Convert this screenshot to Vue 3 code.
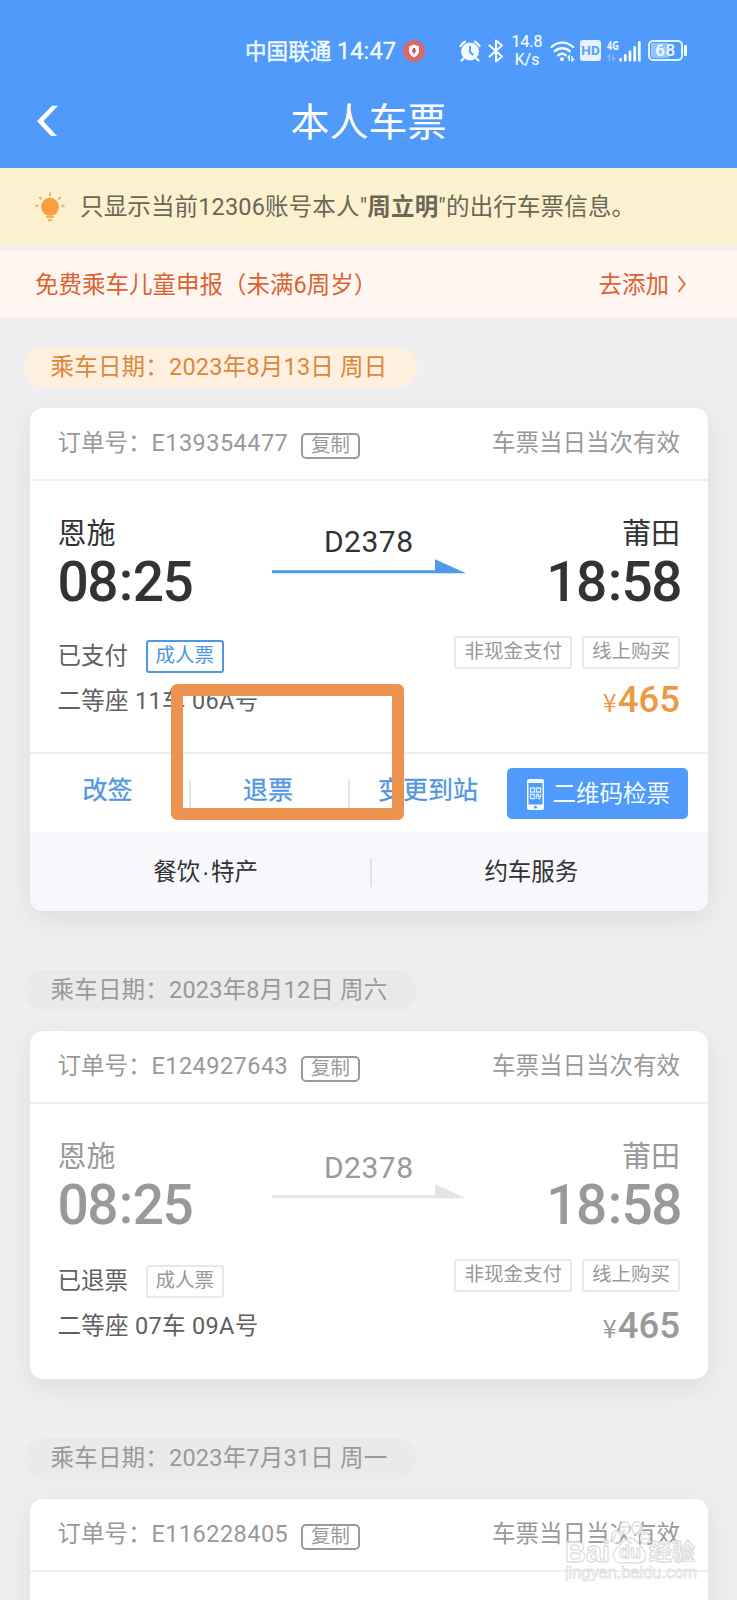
<script setup>
import { h } from 'vue'

const tickets = [
  {
    date: '2023年8月13日 周日', order: 'E139354477', full: true, active: true,
    status: '已支付', seat: '二等座 11车 06A号',
  },
  {
    date: '2023年8月12日 周六', order: 'E124927643', full: true, active: false,
    status: '已退票', seat: '二等座 07车 09A号',
  },
  { date: '2023年7月31日 周一', order: 'E116228405', full: false, active: false },
]

// Sets Latin letters and digits in the numeral face, the rest in the Chinese face.
const Mixed = ({ text }) =>
  h('span', text.split(/([\x20-\x7e]+)/).map((part, i) => (i % 2 ? h('span', { class: 'latin' }, part) : part)))
Mixed.props = ['text']
</script>

<template>
  <div class="screen">
    <header class="top">
      <div class="status">
        <span class="carrier">中国联通</span>
        <span class="clock">14:47</span>
        <svg class="shield" width="22" height="22" viewBox="0 0 22 22">
          <circle cx="11" cy="11" r="11" fill="#d9686a" />
          <path d="M11 4.600l5 1.900v4.300c0 3.100-2.100 5.400-5 6.600-2.900-1.200-5-3.500-5-6.600V6.500z" fill="#fff" />
          <path d="M11 8v5.500M9 10.700h4" stroke="#c9595c" stroke-width="2" />
        </svg>
        <svg class="alarm" width="22" height="22" viewBox="0 0 22 22">
          <circle cx="11" cy="11.500" r="9" fill="#f2fbff" />
          <path d="M1.500 6a14 14 0 0 1 4.500-4.300M20.500 6a14 14 0 0 0-4.500-4.300M4.500 18.500l-2 2M17.500 18.500l2 2" stroke="#f2fbff" stroke-width="2.200" fill="none" stroke-linecap="round" />
          <path d="M11 6v6l3.200 3" stroke="#4f9afb" stroke-width="1.800" fill="none" />
        </svg>
        <svg class="bt" width="16" height="24" viewBox="0 0 16 24">
          <path d="M1.500 6.500l12.500 11-6 5V1.500l6 5-12.500 11" stroke="#f2fbff" stroke-width="2.100" fill="none" stroke-linejoin="round" stroke-linecap="round" />
        </svg>
        <span class="speed"><span>14.8</span><span>K/s</span></span>
        <svg class="wifi" width="25" height="22" viewBox="0 0 25 22">
          <path d="M1.500 7a15.500 15.500 0 0 1 21.500 0M4.800 11.200a11 11 0 0 1 15 0M8.300 15.300a6 6 0 0 1 7.500 0" stroke="#f2fbff" stroke-width="2.400" fill="none" stroke-linecap="round" />
          <circle cx="12" cy="19.200" r="2" fill="#f2fbff" />
          <path d="M19.300 21v-5l-1.700 2M22 16v5l2-2.300" stroke="#f2fbff" stroke-width="1.400" fill="none" />
        </svg>
        <span class="hd">HD</span>
        <span class="net"><b>4G</b>
          <svg width="9" height="7" viewBox="0 0 9 7"><path d="M2.500 7V.8L.7 3M6 0v6l2-2.200" stroke="#86bbff" stroke-width="1.300" fill="none" /></svg>
        </span>
        <svg class="signal" width="22" height="21" viewBox="0 0 22 21">
          <path d="M1.600 19.300v-1M6.300 19.300V14.500M11 19.300V11M15.700 19.300V6.500M20.300 19.300V1.500" stroke="#f2fbff" stroke-width="2.800" stroke-linecap="round" />
        </svg>
        <span class="battery"><i class="charge"></i><b>68</b></span>
        <i class="tip"></i>
      </div>
      <div class="title-row">
        <svg class="back" width="24" height="34" viewBox="0 0 24 34">
          <path d="M22 1.800h-6L1 17.300 15 32h6L7.400 17.300z" fill="#fff" />
        </svg>
        <h1>本人车票</h1>
      </div>
    </header>

    <div class="notice">
      <svg width="30" height="30" viewBox="0 0 30 30">
        <circle cx="15" cy="14.800" r="9" fill="#fb9f3e" />
        <path d="M15 .5v3.400M4.200 5.200l2.400 2M25.800 5.200l-2.400 2M.4 13.700h3.200M26.400 13.700h3.200" stroke="#f0ad5c" stroke-width="1.900" />
        <path d="M11.300 25h7.400M12.800 28.200h4.400" stroke="#fbaa4c" stroke-width="1.900" />
      </svg>
      <p><Mixed text='只显示当前12306账号本人"' /><b>周立明</b><Mixed text='"的出行车票信息。' /></p>
    </div>

    <div class="child">
      <Mixed text="免费乘车儿童申报（未满6周岁）" />
      <span class="add">去添加</span>
      <svg width="10" height="18" viewBox="0 0 10 18"><path d="M1.500 1.200l6.300 7.800-6.300 7.800" stroke="#e07a48" stroke-width="2" fill="none" /></svg>
    </div>

    <section v-for="t in tickets" :key="t.order" class="group" :class="{ active: t.active }">
      <div class="date"><Mixed :text="'乘车日期：' + t.date" /></div>
      <article class="card" :class="{ open: !t.full }">
        <div class="head">
          <span class="order">订单号：<Mixed class="num" :text="t.order" /></span>
          <span class="copy">复制</span>
          <span class="valid">车票当日当次有效</span>
        </div>
        <div v-if="t.full" class="body">
          <div class="trip">
            <div class="stop"><span class="city">恩施</span><span class="time">08<i>:</i>25</span></div>
            <div class="train">
              <span>D2378</span>
              <svg width="194" height="15" viewBox="0 0 194 15"><path d="M0 11.200h163V.3l31 13.900H0z" fill="currentColor" /></svg>
            </div>
            <div class="stop end"><span class="city">莆田</span><span class="time">18<i>:</i>58</span></div>
          </div>
          <div class="info">
            <div class="left">
              <div class="state"><span>{{ t.status }}</span><span class="tag kind">成人票</span></div>
              <div class="seat"><Mixed :text="t.seat" /></div>
            </div>
            <div class="right">
              <div class="tags"><span class="tag">非现金支付</span><span class="tag">线上购买</span></div>
              <div class="price"><span>¥</span><strong>465</strong></div>
            </div>
          </div>
        </div>
        <template v-if="t.active">
          <div class="actions">
            <span class="act a1">改签</span>
            <span class="act a2">退票</span>
            <span class="act a3">变更到站</span>
            <span class="qr">
              <svg width="17" height="31" viewBox="0 0 17 31">
                <rect width="17" height="31" rx="2" fill="#f4faff" />
                <rect x="1.500" y="4" width="14" height="21.500" fill="#4f9afb" />
                <g fill="none" stroke="#d6e9ff" stroke-width="1.300">
                  <path d="M3.500 9h4v4h-4zM9.500 9h4v4h-4zM3.500 15.500h4v4h-4zM9.500 19.500v-4h2v2h2v-2M13.500 19.500h-2.500" />
                </g>
                <circle cx="8.500" cy="28.200" r="1.400" fill="#4f9afb" />
              </svg>
              <span>二维码检票</span>
            </span>
          </div>
          <div class="services"><span>餐饮<i>·</i>特产</span><span>约车服务</span></div>
          <div class="marker"></div>
        </template>
      </article>
    </section>

    <div class="watermark">
      <svg width="136" height="66" viewBox="0 0 136 66">
        <g fill="#fff" fill-opacity=".7" stroke="#dedede" stroke-width="1.300" stroke-linejoin="round">
          <ellipse cx="51" cy="17" rx="4.500" ry="6" /><ellipse cx="60" cy="8" rx="5" ry="6.500" />
          <ellipse cx="72" cy="8" rx="5" ry="6.500" /><ellipse cx="80" cy="18" rx="4.500" ry="6" />
          <path d="M65 18c6 0 8 6 12 10 6 6 4 15-4 15-4 0-11-1-15 0-9 1-13-9-6-15 4-4 7-10 13-10z" />
          <text x="0" y="42" font-size="29" font-weight="700" textLength="45" lengthAdjust="spacingAndGlyphs">Bai</text>
          <text x="54" y="38" font-size="18" font-weight="700" textLength="22" lengthAdjust="spacingAndGlyphs">du</text>
          <text x="84" y="40" font-size="23" font-weight="700" textLength="46">经验</text>
          <text x="0" y="58" font-size="16.500" stroke-width=".8" textLength="132">jingyan.baidu.com</text>
        </g>
      </svg>
    </div>
  </div>
</template>

<style>
body { background: #efeff1; }
.latin { font-family: Roboto, sans-serif; line-height: 0; }
</style>

<style scoped>
.screen { position: relative; width: 737px; height: 1600px; overflow: hidden; background: #efeff1; font-family: "Noto Sans CJK SC", sans-serif; font-size: 23.5px; line-height: 34px; color: #333; }
.screen * { box-sizing: border-box; }
.screen i { font-style: normal; }
.screen span, .screen b, .screen strong { white-space: nowrap; }
.top { height: 168px; background: #4f9afb; color: #fff; padding-top: 33px; }
.status { display: flex; align-items: center; height: 36px; padding-left: 245px; color: #f2fbff; }
.carrier { width: 92px; font-size: 21.600px; padding-bottom: 3px; -webkit-text-stroke: .4px; }
.clock { width: 66px; font: 400 23.5px/34px Roboto, sans-serif; letter-spacing: .1px; -webkit-text-stroke: .4px; }
.alarm { margin-left: 34px; }
.bt { margin-left: 7px; }
.speed { display: flex; flex-direction: column; align-items: center; width: 32px; margin-left: 7px; font: 400 15.800px/18px Roboto, sans-serif; -webkit-text-stroke: .2px; padding-bottom: 1px; }
.wifi { margin-left: 7px; }
.hd { width: 21px; height: 21px; margin-left: 5px; margin-top: -2px; border-radius: 3px; background: #e3f2ff; color: #5b9ff0; font: 700 13.500px/21px Roboto, sans-serif; text-align: center; }
.net { display: flex; flex-direction: column; width: 12px; margin-left: 6px; height: 21px; }
.net b { font: 700 12px/10px "Open Sans", sans-serif; transform: scaleX(.76); transform-origin: left; }
.net svg { margin-top: 3px; }
.battery { position: relative; display: flex; align-items: center; justify-content: center; width: 35px; height: 21px; margin-left: 7px; border: 2px solid #e3f2ff; border-radius: 5px; margin-top: -1px; }
.battery b { position: relative; font: 500 17px/17px Roboto, sans-serif; letter-spacing: .6px; }
.charge { position: absolute; left: 1px; top: 1px; width: 18px; height: 15px; border-radius: 2px; background: #95c3ff; }
.tip { width: 3px; height: 11px; margin-left: 1px; border-radius: 1px; background: #f2fbff; margin-top: -1px; }
.title-row { display: flex; align-items: center; height: 60px; margin-top: 20px; padding-left: 36px; }
.back { margin-top: 4px; }
h1 { margin: 0 0 0 230.500px; font-size: 39px; line-height: 60px; font-weight: 400; }
.notice { display: flex; align-items: center; height: 78px; padding-left: 35px; background: #fbf1cf; color: #6a6755; }
.notice p { margin: 0 0 4px 15px; white-space: nowrap; letter-spacing: .15px; }
.child { display: flex; align-items: center; height: 71px; padding: 0 50px 2px 35px; border-top: 4px solid #f0efee; background: #fff6f1; color: #db6331; }
.add { margin-left: auto; margin-right: 8px; }
.child svg { margin-top: 2px; }
.group { padding: 30px 29px 0 29.500px; color: #999; }
.group + .group { padding-top: 59px; }
.date { width: 393px; height: 41px; margin-left: -5.500px; padding-left: 26.500px; line-height: 36px; letter-spacing: .2px; white-space: nowrap; border-radius: 21px; background: #eaeaeb; }
.active .date { background: #ffefde; color: #dc873b; }
.card { position: relative; margin-top: 20px; border-radius: 13px; background: #fff; box-shadow: 0 8px 28px rgba(60, 60, 80, .1); }
.card.open { height: 300px; }
.head { display: flex; align-items: center; height: 73px; padding: 0 28px 6px; border-bottom: 2px solid #efefef; }
.order { width: 231px; }
.num { letter-spacing: .45px; }
.copy { width: 59px; height: 26px; margin: 10px 0 0 12.500px; border: 2px solid #999; border-radius: 5px; font-size: 19.400px; line-height: 17px; text-align: center; }
.valid { margin-left: auto; }
.body { height: 275px; padding: 0 28px; }
.active .body { height: 273px; }
.trip { display: flex; justify-content: space-between; height: 155px; padding-top: 31px; }
.stop { display: flex; flex-direction: column; width: 140px; }
.end { align-items: flex-end; }
.city { font-size: 29px; line-height: 38px; }
.time { margin-top: 5px; font: 500 55px/54px Roboto, sans-serif; letter-spacing: -1.500px; }
.time i { position: relative; top: -1px; padding: 0 .8px 0 1.800px; }
.end .time { margin-right: -1px; }
.train { display: flex; flex-direction: column; align-items: center; color: #e3e3e3; margin: 16px 0 0 0; }
.train span { color: #999; font: 400 30px/34px Roboto, sans-serif; letter-spacing: .5px; }
.train svg { margin-top: -1px; }
.active .train { margin-top: 13px; color: #5096ec; }
.active .train svg { margin-top: 0; }
.active .stop, .active .train span { color: #333; }
.info { display: flex; justify-content: space-between; }
.tag { display: inline-block; height: 33px; padding: 0 8px; border: 2px solid #e8e8e8; border-radius: 3px; font-size: 19.500px; line-height: 24px; color: #999; }
.left { color: #606060; padding-top: 6px; }
.state { display: flex; align-items: flex-start; height: 44px; }
.state > span:first-child { margin-top: -3px; }
.kind { margin-left: 17.500px; }
.active .kind { border-color: #5096e0; color: #5096e0; }
.active .left { padding-top: 4px; }
.seat { line-height: 34px; margin-top: -2px; letter-spacing: .3px; }
.tags { display: flex; gap: 10px; }
.price { display: flex; justify-content: flex-end; align-items: baseline; margin-top: 14px; }
.price span { font-size: 25px; width: 15px; }
.price strong { font: 500 36.500px/40px Roboto, sans-serif; }
.active .price { color: #eb9a43; margin-top: 11px; }
.actions { position: relative; display: flex; height: 80px; margin-top: -2px; padding-top: 14px; border-top: 2px solid #efefef; color: #5096e0; }
.act { display: flex; justify-content: center; height: 48px; font-size: 25px; line-height: 41px; -webkit-text-stroke: .3px; }
.a1 { width: 159px; padding-right: 3px; }
.a2 { width: 161px; position: relative; padding-right: 2px; }
.a2::before, .a2::after { content: ""; position: absolute; top: 11px; width: 2px; height: 30px; background: #e7e7e7; }
.a2::before { left: 0; }
.a2::after { right: 0; }
.a3 { width: 157px; }
.qr { display: flex; align-items: center; width: 181px; height: 51px; border-radius: 5px; background: #4f9afb; color: #f4fbff; padding-left: 20px; }
.qr > svg { margin-top: 1px; }
.qr > span { margin: 0 0 3px 9px; }
.services { position: relative; display: flex; height: 79px; background: #f7f7fc; color: #333; border-radius: 0 0 13px 13px; line-height: 76px; }
.services span { width: 50%; padding-left: 13px; text-align: center; }
.services span + span { padding-left: 0; padding-right: 14px; }
.services i { font-family: "Liberation Sans", sans-serif; padding: 0 1.500px; line-height: 0; }
.services::after { content: ""; position: absolute; left: 340px; top: 26px; width: 2px; height: 29px; background: #e2e2e6; }
.marker { position: absolute; left: 141px; top: 276px; width: 233px; height: 136px; border: 12px solid #ec9350; border-radius: 6px; }
.watermark { position: absolute; left: 565px; top: 1520px; font-family: "Liberation Sans", "Noto Sans CJK SC", sans-serif; line-height: 0; }
</style>
